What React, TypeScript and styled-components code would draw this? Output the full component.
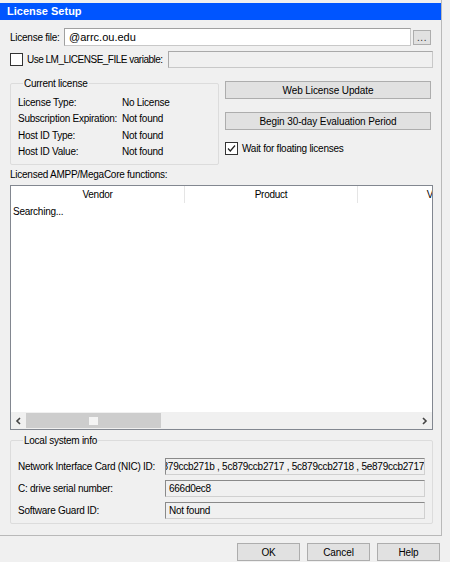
import React from 'react'
import styled, { createGlobalStyle } from 'styled-components'

const GlobalStyle = createGlobalStyle`
  html, body {
    margin: 0;
    padding: 0;
    background: #f0f0f0;
    font-family: "Liberation Sans", Arial, sans-serif;
    font-size: 10px;
    letter-spacing: -0.25px;
    color: #000;
  }
`

const Page = styled.div`
  width: 450px;
  height: 562px;
  display: flex;
  flex-direction: column;
  background: #f0f0f0;
`

const Window = styled.div`
  width: 441px;
  height: 532px;
  padding-top: 3px;
  border-right: 1px solid #b9b9b9;
  border-bottom: 1px solid #b9b9b9;
  display: flex;
  flex-direction: column;
`

const TitleBar = styled.div`
  height: 17px;
  background: #0055ff;
  color: #fff;
  font-weight: bold;
  font-size: 11px;
  letter-spacing: 0;
  line-height: 17px;
  padding-left: 7px;
`

const Body = styled.div`
  padding: 8px 0 0 10px;
  display: flex;
  flex-direction: column;
`

const Row = styled.div<{ $top?: number; $height?: number }>`
  display: flex;
  align-items: center;
  margin-top: ${({ $top }) => $top ?? 0}px;
  height: ${({ $height }) => $height ?? 18}px;
`

const Label = styled.span<{ $width?: number; $tight?: boolean }>`
  width: ${({ $width }) => ($width ? `${$width}px` : 'auto')};
  flex-shrink: 0;
  white-space: nowrap;
  letter-spacing: ${({ $tight }) => ($tight ? '-0.5px' : 'inherit')};
`

const TextBox = styled.div<{ $width: number; $height?: number; $disabled?: boolean }>`
  box-sizing: border-box;
  width: ${({ $width }) => $width}px;
  height: ${({ $height }) => $height ?? 18}px;
  border: 1px solid ${({ $disabled }) => ($disabled ? '#a9a9a9' : '#a0a0a0')};
  border-right-color: #c8c8c8;
  border-bottom-color: #c8c8c8;
  background: ${({ $disabled }) => ($disabled ? '#f0f0f0' : '#fff')};
  padding-left: 4px;
  font-size: 11px;
  letter-spacing: 0;
  line-height: 16px;
  white-space: nowrap;
  overflow: hidden;
`

const ValueBox = styled.div`
  box-sizing: border-box;
  width: 260px;
  height: 17px;
  border: 1px solid #8a8a8a;
  border-right-color: #d0d0d0;
  border-bottom-color: #d0d0d0;
  background: #f0f0f0;
  line-height: 15px;
  padding-left: 3px;
  white-space: nowrap;
  overflow: hidden;
  direction: rtl;
  text-align: left;
`

const ValueText = styled.span`
  direction: ltr;
  unicode-bidi: embed;
`

const SmallButton = styled.button`
  box-sizing: border-box;
  width: 18px;
  height: 15px;
  margin-left: 2px;
  padding: 0;
  border: 1px solid #adadad;
  background: #e1e1e1;
  font-family: inherit;
  font-size: 10px;
  line-height: 9px;
  color: #333;
  letter-spacing: 0.5px;
`

const Button = styled.button<{ $width?: number }>`
  box-sizing: border-box;
  width: ${({ $width }) => ($width ? `${$width}px` : '100%')};
  height: 18px;
  padding: 0;
  border: 1px solid #adadad;
  background: #e1e1e1;
  font-family: inherit;
  font-size: 10px;
  letter-spacing: -0.1px;
  color: #000;
`

const CheckBox = styled.span`
  box-sizing: border-box;
  width: 13px;
  height: 13px;
  border: 1px solid #333;
  background: #fff;
  display: inline-flex;
  align-items: center;
  justify-content: center;
  flex-shrink: 0;
  margin-right: 4px;
`

const Middle = styled.div`
  display: flex;
  margin-top: 9px;
  gap: 6px;
`

const Group = styled.fieldset<{ $width: number; $height: number; $top?: number }>`
  box-sizing: border-box;
  width: ${({ $width }) => $width}px;
  height: ${({ $height }) => $height}px;
  margin: ${({ $top }) => $top ?? 0}px 0 0 0;
  padding: 4px 0 0 7px;
  border: 1px solid #dcdcdc;
  border-radius: 2px;
  legend {
    padding: 0 1px;
    margin-left: 5px;
    line-height: 13px;
  }
`

const InfoRow = styled.div<{ $height?: number; $top?: number }>`
  display: flex;
  height: ${({ $height }) => $height ?? 16.5}px;
  margin-top: ${({ $top }) => $top ?? 0}px;
  align-items: center;
`

const RightCol = styled.div`
  width: 206px;
  display: flex;
  flex-direction: column;
  padding-top: 4px;
  gap: 13px;
`

const SectionLabel = styled.div`
  margin-top: 3px;
  height: 13px;
  line-height: 13px;
`

const ListView = styled.div`
  box-sizing: border-box;
  width: 423px;
  height: 245px;
  margin-top: 4px;
  border: 1px solid #828790;
  background: #fff;
  display: flex;
  flex-direction: column;
`

const HeaderRow = styled.div`
  display: flex;
  height: 18px;
  overflow: hidden;
  flex-shrink: 0;
`

const HeaderCell = styled.div<{ $width: number }>`
  width: ${({ $width }) => $width}px;
  flex-shrink: 0;
  text-align: center;
  line-height: 18px;
  border-right: 1px solid #e5e5e5;
  box-sizing: border-box;
  margin-bottom: 1px;
`

const ListBody = styled.div`
  flex: 1;
  padding: 2px 0 0 2px;
`

const HScroll = styled.div`
  height: 17px;
  background: #f0f0f0;
  display: flex;
  align-items: center;
`

const ScrollArrow = styled.div`
  width: 15px;
  height: 17px;
  display: flex;
  align-items: center;
  justify-content: center;
`

const Thumb = styled.div`
  width: 135px;
  height: 15px;
  background: #cdcdcd;
  display: flex;
  align-items: center;
  justify-content: center;
`

const Grip = styled.div`
  width: 9px;
  height: 8px;
  background: #f4f4f4;
`

const Track = styled.div`
  flex: 1;
`

const Footer = styled.div`
  display: flex;
  justify-content: flex-end;
  gap: 7px;
  padding: 7px 10px 0 0;
`

const Chevron = ({ dir }: { dir: 'left' | 'right' }) => (
  <svg width="7" height="8" viewBox="0 0 7 8">
    <path
      d={dir === 'left' ? 'M5 1 L2 4 L5 7' : 'M2 1 L5 4 L2 7'}
      fill="none"
      stroke="#444"
      strokeWidth="1.6"
    />
  </svg>
)

const Check = () => (
  <svg width="11" height="11" viewBox="0 0 11 11">
    <path d="M2 5.5 L4.3 8 L9 2.5" fill="none" stroke="#222" strokeWidth="1.2" />
  </svg>
)

const licenseInfo = [
  ['License Type:', 'No License'],
  ['Subscription Expiration:', 'Not found'],
  ['Host ID Type:', 'Not found'],
  ['Host ID Value:', 'Not found'],
]

const systemInfo = [
  ['Network Interface Card (NIC) ID:', '5c879ccb271b , 5c879ccb2717 , 5c879ccb2718 , 5e879ccb2717'],
  ['C: drive serial number:', '666d0ec8'],
  ['Software Guard ID:', 'Not found'],
]

const columns = [
  { title: 'Vendor', width: 174 },
  { title: 'Product', width: 173 },
  { title: 'Version', width: 170 },
]

const App: React.FunctionComponent = () => {
  return (
    <Page>
      <GlobalStyle />
      <Window>
        <TitleBar>License Setup</TitleBar>
        <Body>
          <Row>
            <Label $width={54}>License file:</Label>
            <TextBox $width={347}>@arrc.ou.edu</TextBox>
            <SmallButton>...</SmallButton>
          </Row>
          <Row $top={5} $height={17}>
            <CheckBox />
            <Label $width={141} $tight>
              Use LM_LICENSE_FILE variable:
            </Label>
            <TextBox $width={265} $height={17} $disabled />
          </Row>

          <Middle>
            <Group $width={209} $height={88}>
              <legend>Current license</legend>
              {licenseInfo.map(([k, v], index) => (
                <InfoRow key={index}>
                  <Label $width={104}>{k}</Label>
                  <span>{v}</span>
                </InfoRow>
              ))}
            </Group>
            <RightCol>
              <Button>Web License Update</Button>
              <Button>Begin 30-day Evaluation Period</Button>
              <Row $top={-1} $height={13}>
                <CheckBox>
                  <Check />
                </CheckBox>
                <span>Wait for floating licenses</span>
              </Row>
            </RightCol>
          </Middle>

          <SectionLabel>Licensed AMPP/MegaCore functions:</SectionLabel>
          <ListView>
            <HeaderRow>
              {columns.map((c) => (
                <HeaderCell key={c.title} $width={c.width}>
                  {c.title}
                </HeaderCell>
              ))}
            </HeaderRow>
            <ListBody>Searching...</ListBody>
            <HScroll>
              <ScrollArrow>
                <Chevron dir="left" />
              </ScrollArrow>
              <Thumb>
                <Grip />
              </Thumb>
              <Track />
              <ScrollArrow>
                <Chevron dir="right" />
              </ScrollArrow>
            </HScroll>
          </ListView>

          <Group $width={423} $height={90} $top={4}>
            <legend>Local system info</legend>
            {systemInfo.map(([k, v], index) => (
              <InfoRow key={index} $height={22} $top={index === 0 ? 4 : 0}>
                <Label $width={147}>{k}</Label>
                <ValueBox>
                  <ValueText>{v}</ValueText>
                </ValueBox>
              </InfoRow>
            ))}
          </Group>
        </Body>
      </Window>
      <Footer>
        <Button $width={63}>OK</Button>
        <Button $width={63}>Cancel</Button>
        <Button $width={63}>Help</Button>
      </Footer>
    </Page>
  )
}

export default App
